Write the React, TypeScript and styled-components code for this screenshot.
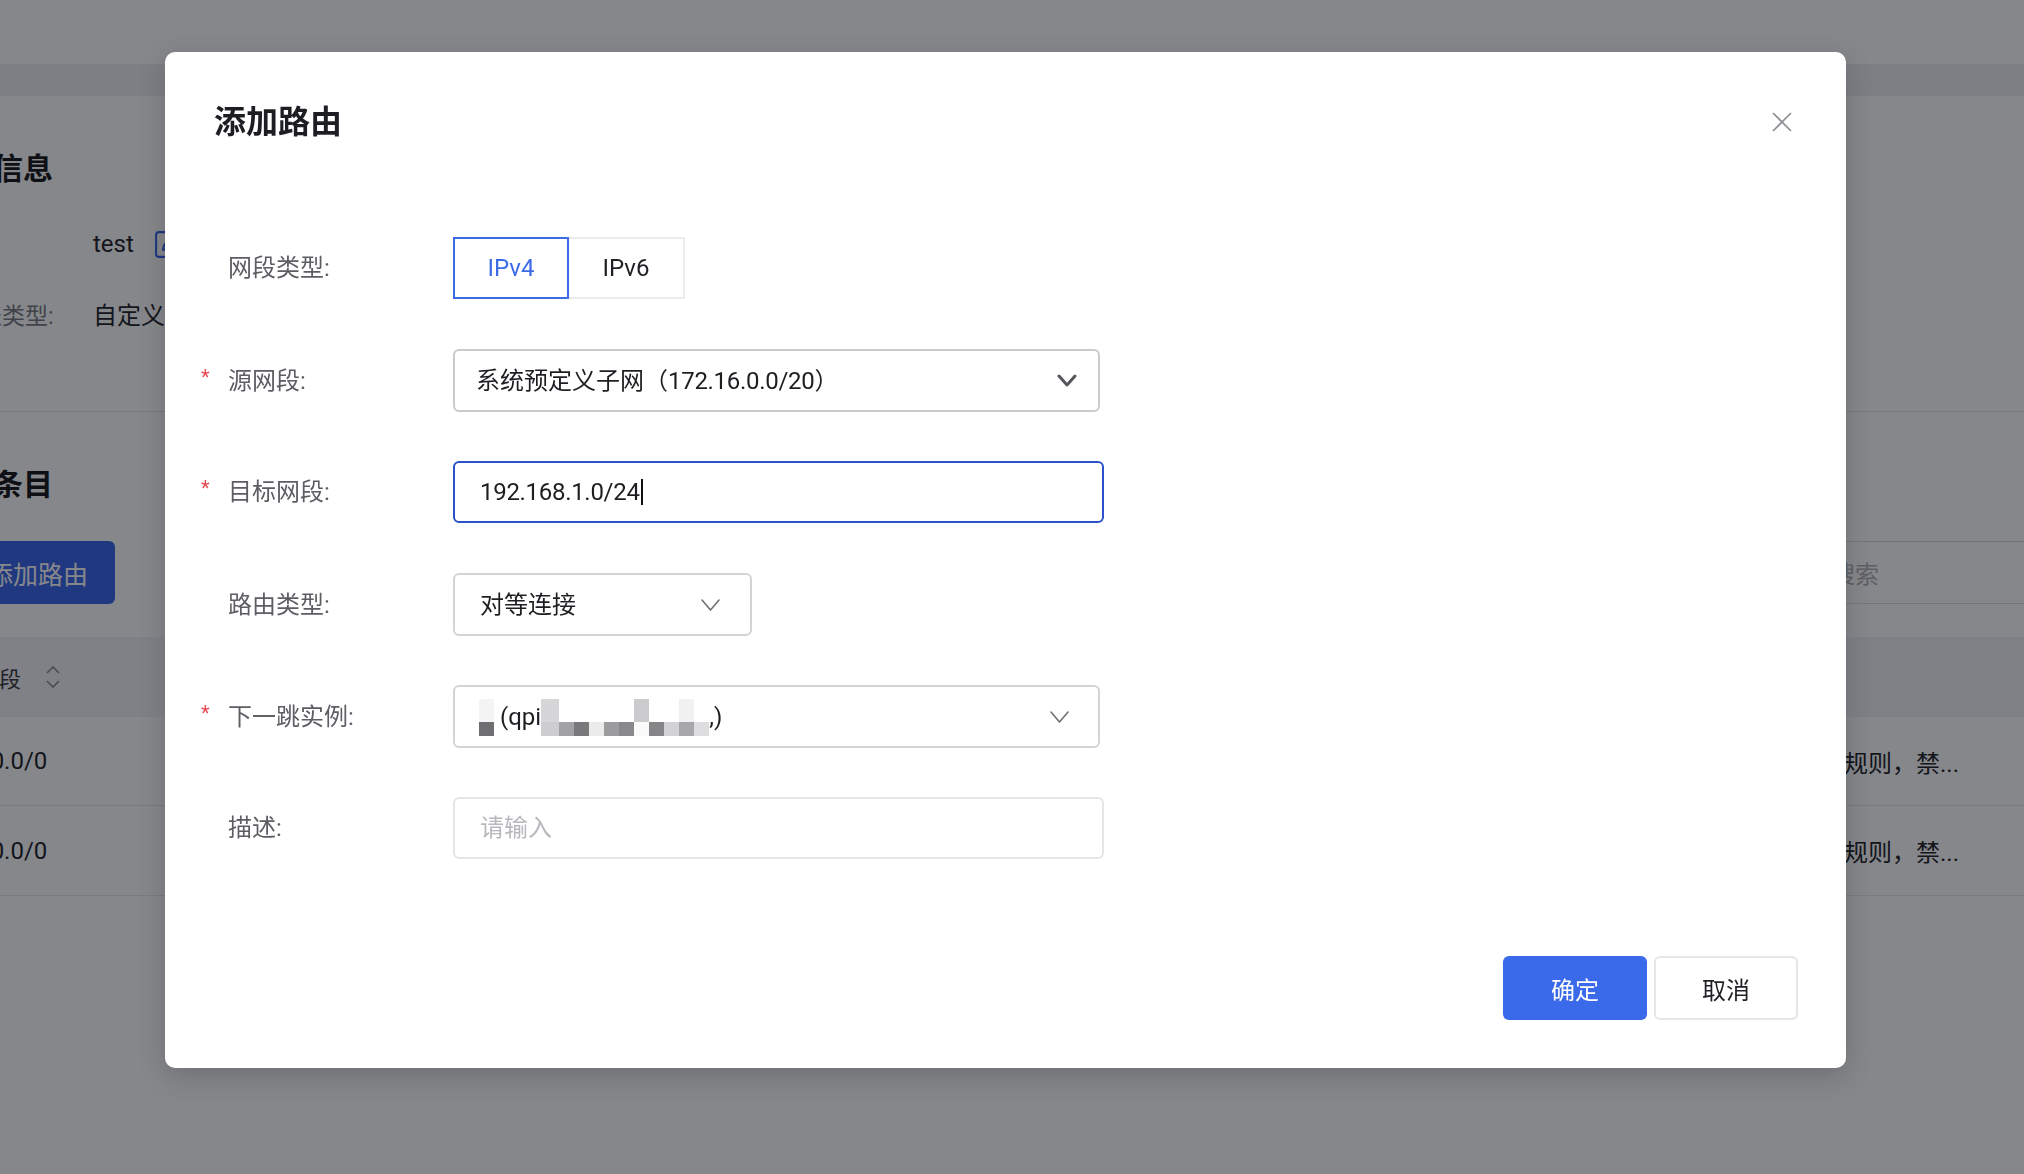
import React from "react";
import styled, { createGlobalStyle } from "styled-components";
import { Plus, SquarePen } from "lucide-react";

const GlobalStyle = createGlobalStyle`
  html, body {
    margin: 0;
    padding: 0;
  }
  body {
    width: 2024px;
    height: 1174px;
    overflow: hidden;
    background: #fff;
    color: #1f2024;
    font-family: Roboto, "Noto Sans CJK SC", sans-serif;
  }
  * {
    box-sizing: border-box;
  }
`;

/* ---------- page behind the dialog ---------- */

const Page = styled.div`
  position: relative;
  width: 2024px;
  height: 1174px;
  overflow: hidden;
  background: #fff;
`;

const TopBar = styled.div`
  height: 64px;
  background: #fff;
`;

const SubBar = styled.div`
  height: 32px;
  background: #eef0f3;
`;

const Content = styled.div`
  margin-left: -67px;
  width: 2167px;
  display: flex;
  flex-direction: column;
`;

const Section = styled.section<{ $divider?: boolean }>`
  padding-top: 53px;
  padding-bottom: ${(p) => (p.$divider ? "81px" : "0")};
  border-bottom: ${(p) => (p.$divider ? "1px solid #e6e7ea" : "none")};
`;

const SectionTitle = styled.h3`
  margin: 0;
  font-size: 30px;
  line-height: 40px;
  font-weight: 700;
  color: #1b1c20;
`;

const InfoList = styled.div`
  margin-top: 38px;
  display: flex;
  flex-direction: column;
  gap: 35px;
`;

const InfoRow = styled.div`
  display: grid;
  grid-template-columns: 160px auto;
  align-items: center;
  height: 34px;
`;

const InfoLabel = styled.span`
  font-size: 23px;
  color: #7a7b80;
`;

const InfoValue = styled.span`
  display: flex;
  align-items: center;
  gap: 18px;
  font-size: 24px;
  color: #27282c;
`;

const Toolbar = styled.div`
  margin-top: 36px;
  height: 63px;
  display: flex;
  justify-content: space-between;
`;

const PrimaryButton = styled.button`
  height: 63px;
  padding: 0 27px;
  display: flex;
  align-items: center;
  gap: 8px;
  border: 0;
  border-radius: 6px;
  background: #3a69e9;
  color: #fff;
  font-family: inherit;
  font-size: 25px;
`;

const SearchBox = styled.div`
  width: 290px;
  height: 63px;
  padding-left: 20px;
  display: flex;
  align-items: center;
  border: 1px solid #dcdde0;
  border-radius: 6px;
  color: #b3b4b8;
  font-size: 24px;
`;

const Table = styled.div`
  margin-top: 33px;
  display: flex;
  flex-direction: column;
`;

const TableRow = styled.div<{ $head?: boolean; $h: number }>`
  display: grid;
  grid-template-columns: 467px 500px 450px 428px 322px;
  align-items: center;
  height: ${(p) => p.$h}px;
  background: ${(p) => (p.$head ? "#f3f4f6" : "#fff")};
  border-bottom: ${(p) => (p.$head ? "none" : "1px solid #e8e9ec")};
`;

const Cell = styled.div<{ $pad?: number }>`
  display: flex;
  align-items: center;
  padding-left: ${(p) => (p.$pad ?? 18)}px;
  font-size: 24px;
  color: #26272b;
  white-space: nowrap;
  overflow: hidden;
`;

const HeadCell = styled(Cell)`
  font-size: 22px;
  color: #3a3b40;
  gap: 24px;
`;

const SortIcon = () => (
  <svg width="16" height="26" viewBox="0 0 16 26" fill="none" stroke="#8e8f94" strokeWidth="1.6">
    <path d="M2 9 L8 3 L14 9" />
    <path d="M2 17 L8 23 L14 17" />
  </svg>
);

/* ---------- dialog ---------- */

const Overlay = styled.div`
  position: fixed;
  inset: 0;
  background: rgba(2, 4, 12, 0.48);
`;

const Dialog = styled.div`
  position: fixed;
  left: 165px;
  top: 52px;
  width: 1681px;
  height: 1016px;
  padding: 48px 48px 48px 36px;
  display: flex;
  flex-direction: column;
  background: #fff;
  border-radius: 10px;
  box-shadow: 0 8px 28px rgba(0, 0, 0, 0.18);
`;

const DialogHeader = styled.div`
  height: 44px;
  display: flex;
  align-items: center;
  justify-content: space-between;
`;

const Title = styled.h2`
  margin: 0 0 0 13px;
  font-size: 32px;
  line-height: 44px;
  font-weight: 600;
  color: #1d1e22;
`;

const CloseButton = styled.button`
  width: 20px;
  height: 20px;
  margin-right: 6px;
  padding: 0;
  border: 0;
  background: none;
  display: flex;
`;

const Form = styled.div`
  margin-top: 93px;
  display: flex;
  flex-direction: column;
  gap: 50px;
`;

const FormRow = styled.div`
  display: grid;
  grid-template-columns: 252px auto;
  align-items: center;
  height: 62px;
`;

const Label = styled.div`
  display: flex;
  align-items: center;
  font-size: 24px;
  line-height: 34px;
  color: #5d5e63;
`;

const Required = styled.span`
  width: 27px;
  font-size: 20px;
  line-height: 34px;
  color: #e5484d;
  transform: translateY(-4px);
`;

const Segmented = styled.div`
  display: flex;
`;

const SegButton = styled.button<{ $active?: boolean }>`
  width: 116px;
  height: 62px;
  padding: 0;
  background: #fff;
  font-family: inherit;
  font-size: 24px;
  color: ${(p) => (p.$active ? "#3d6be6" : "#1f2024")};
  border: 2px solid ${(p) => (p.$active ? "#3d6be6" : "#ececee")};
  border-left-width: ${(p) => (p.$active ? "2px" : "0")};
`;

type Tone = "strong" | "normal" | "light" | "focus";

const borderColors: Record<Tone, string> = {
  strong: "#c9cacd",
  normal: "#d3d4d7",
  light: "#e4e5e8",
  focus: "#2c51c8",
};

const Field = styled.div<{ $w: number; $h: number; $tone: Tone; $pl: number; $pr?: number }>`
  width: ${(p) => p.$w}px;
  height: ${(p) => p.$h}px;
  padding: 0 ${(p) => p.$pr ?? 0}px 0 ${(p) => p.$pl}px;
  display: flex;
  align-items: center;
  justify-content: space-between;
  border: 2px solid ${(p) => borderColors[p.$tone]};
  border-radius: 6px;
  background: #fff;
  font-size: 24px;
  color: #1d1e22;
  white-space: nowrap;
`;

const Value = styled.span`
  display: flex;
  align-items: center;
  line-height: 34px;
`;

const Numeric = styled.span`
  letter-spacing: -0.3px;
`;

const Placeholder = styled.span`
  line-height: 34px;
  color: #b7b8bc;
`;

const Caret = styled.span`
  width: 2px;
  height: 26px;
  margin-left: 1px;
  background: #111;
`;

const Chevron = ({ bold }: { bold?: boolean }) =>
  bold ? (
    <svg width="20" height="13" viewBox="0 0 20 13" fill="none" stroke="#55565b" strokeWidth="3" strokeLinecap="round" strokeLinejoin="round">
      <path d="M2 2 L10 11 L18 2" />
    </svg>
  ) : (
    <svg width="19" height="12" viewBox="0 0 19 12" fill="none" stroke="#6f7075" strokeWidth="1.6" strokeLinecap="round" strokeLinejoin="round">
      <path d="M1 1 L9.5 11 L18 1" />
    </svg>
  );

/* masked instance name: pixel blocks */
type MaskCell = { top: string; bottom: string };

const maskCells: MaskCell[] = [
  { top: "#d6d6d8", bottom: "#cdcdcf" },
  { top: "#ffffff", bottom: "#a2a2a4" },
  { top: "#ffffff", bottom: "#79797b" },
  { top: "#ffffff", bottom: "#ebebec" },
  { top: "#ffffff", bottom: "#9c9c9e" },
  { top: "#ffffff", bottom: "#89898b" },
  { top: "#cbcbcd", bottom: "#fafafa" },
  { top: "#ffffff", bottom: "#858587" },
  { top: "#ffffff", bottom: "#d2d2d4" },
  { top: "#f1f1f2", bottom: "#a8a8aa" },
  { top: "#ffffff", bottom: "#dedee0" },
];

const Mask = styled.span<{ $first?: boolean }>`
  display: inline-flex;
  height: 37px;
  margin-top: 2px;
  margin-right: ${(p) => (p.$first ? "6px" : "0")};
`;

const MaskBlock = styled.span<{ $top: string; $bottom: string; $w: number }>`
  display: flex;
  flex-direction: column;
  width: ${(p) => p.$w}px;
  &::before {
    content: "";
    height: 23px;
    background: ${(p) => p.$top};
  }
  &::after {
    content: "";
    height: 14px;
    background: ${(p) => p.$bottom};
  }
`;

const FooterBar = styled.div`
  margin-top: auto;
  display: flex;
  justify-content: flex-end;
  gap: 7px;
`;

const FooterButton = styled.button<{ $primary?: boolean }>`
  width: 144px;
  height: 64px;
  padding: 0;
  border-radius: 6px;
  font-family: inherit;
  font-size: 24px;
  background: ${(p) => (p.$primary ? "#3a69e9" : "#fff")};
  color: ${(p) => (p.$primary ? "#fff" : "#1f2024")};
  border: ${(p) => (p.$primary ? "0" : "2px solid #e6e6e8")};
`;

const routes = [
  { dest: "0.0.0.0/0", type: "本地", hop: "Local", desc: "默认规则，禁..." },
  { dest: "0.0.0.0/0", type: "本地", hop: "Local", desc: "默认规则，禁..." },
];

export default function App() {
  return (
    <>
      <GlobalStyle />
      <Page>
        <TopBar />
        <SubBar />
        <Content>
          <Section $divider>
            <SectionTitle>基本信息</SectionTitle>
            <InfoList>
              <InfoRow>
                <InfoLabel>名称:</InfoLabel>
                <InfoValue>
                  test
                  <SquarePen size={33} strokeWidth={1.5} color="#3a69e9" />
                </InfoValue>
              </InfoRow>
              <InfoRow>
                <InfoLabel>路由表类型:</InfoLabel>
                <InfoValue>自定义</InfoValue>
              </InfoRow>
            </InfoList>
          </Section>
          <Section>
            <SectionTitle>路由条目</SectionTitle>
            <Toolbar>
              <PrimaryButton>
                <Plus size={20} />
                添加路由
              </PrimaryButton>
              <SearchBox>搜索</SearchBox>
            </Toolbar>
            <Table>
              <TableRow $head $h={80}>
                <HeadCell $pad={0}>
                  目标网段
                  <SortIcon />
                </HeadCell>
                <HeadCell>路由类型</HeadCell>
                <HeadCell>下一跳</HeadCell>
                <HeadCell>状态</HeadCell>
                <HeadCell $pad={24}>描述</HeadCell>
              </TableRow>
              {routes.map((r, i) => (
                <TableRow key={i} $h={i === 0 ? 89 : 90}>
                  <Cell>{r.dest}</Cell>
                  <Cell>{r.type}</Cell>
                  <Cell>{r.hop}</Cell>
                  <Cell>可用</Cell>
                  <Cell>{r.desc}</Cell>
                </TableRow>
              ))}
            </Table>
          </Section>
        </Content>
      </Page>

      <Overlay />
      <Dialog>
        <DialogHeader>
          <Title>添加路由</Title>
          <CloseButton aria-label="关闭">
            <svg width="20" height="20" viewBox="0 0 20 20" fill="none" stroke="#8b8c91" strokeWidth="1.6">
              <path d="M1 1 L19 19 M19 1 L1 19" />
            </svg>
          </CloseButton>
        </DialogHeader>

        <Form>
          <FormRow>
            <Label>
              <Required />
              网段类型:
            </Label>
            <Segmented>
              <SegButton $active>IPv4</SegButton>
              <SegButton>IPv6</SegButton>
            </Segmented>
          </FormRow>

          <FormRow>
            <Label>
              <Required>*</Required>
              源网段:
            </Label>
            <Field $w={647} $h={63} $tone="strong" $pl={21} $pr={21}>
              <Value>
                系统预定义子网（<Numeric>172.16.0.0/20</Numeric>）
              </Value>
              <Chevron bold />
            </Field>
          </FormRow>

          <FormRow>
            <Label>
              <Required>*</Required>
              目标网段:
            </Label>
            <Field $w={651} $h={62} $tone="focus" $pl={25}>
              <Value>
                <Numeric>192.168.1.0/24</Numeric>
                <Caret />
              </Value>
            </Field>
          </FormRow>

          <FormRow>
            <Label>
              <Required />
              路由类型:
            </Label>
            <Field $w={299} $h={63} $tone="normal" $pl={25} $pr={30}>
              <Value>对等连接</Value>
              <Chevron />
            </Field>
          </FormRow>

          <FormRow>
            <Label>
              <Required>*</Required>
              下一跳实例:
            </Label>
            <Field $w={647} $h={63} $tone="normal" $pl={24} $pr={29}>
              <Value>
                <Mask $first>
                  <MaskBlock $w={15} $top="#f4f4f5" $bottom="#6f6f71" />
                </Mask>
                (qpi
                <Mask>
                  {maskCells.map((c, i) => (
                    <MaskBlock key={i} $w={i === 0 ? 18 : 15} $top={c.top} $bottom={c.bottom} />
                  ))}
                </Mask>
                ,)
              </Value>
              <Chevron />
            </Field>
          </FormRow>

          <FormRow>
            <Label>
              <Required />
              描述:
            </Label>
            <Field $w={651} $h={62} $tone="light" $pl={25}>
              <Placeholder>请输入</Placeholder>
            </Field>
          </FormRow>
        </Form>

        <FooterBar>
          <FooterButton $primary>确定</FooterButton>
          <FooterButton>取消</FooterButton>
        </FooterBar>
      </Dialog>
    </>
  );
}
